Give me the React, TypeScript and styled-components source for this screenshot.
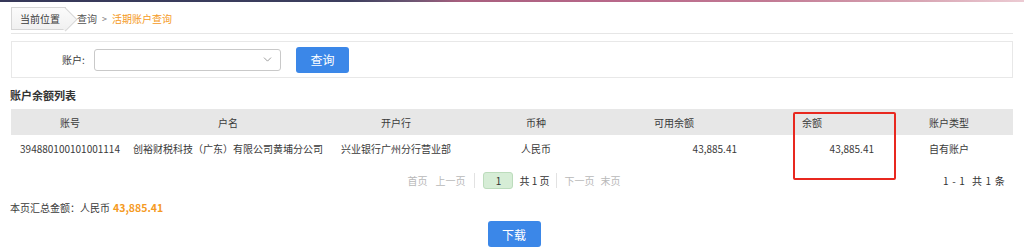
import React from "react";
import styled, { createGlobalStyle } from "styled-components";
import { ChevronDown } from "lucide-react";

const Global = createGlobalStyle`
  html, body { margin: 0; padding: 0; background: #fff; }
  body {
    font-family: "Noto Sans CJK SC", "Noto Sans", sans-serif;
    font-size: 10px;
    color: #3a3a3a;
  }
  * { box-sizing: border-box; }
`;

const TopBar = styled.div`
  height: 2px;
  background: linear-gradient(
    to right,
    #363859 0%,
    #3c3e5e 34%,
    #6a5572 40%,
    #a85f7e 45%,
    #b8688a 60%,
    #c27a94 75%,
    #d8a6b4 90%,
    #eccbd3 100%
  );
`;

const Page = styled.div`
  padding: 0 11px;
  width: 1024px;
`;

const Crumbs = styled.div`
  margin-top: 5px;
  padding-bottom: 3px;
  border-bottom: 1px solid #e6e6e6;
  display: flex;
  align-items: center;
  gap: 3px;
  box-sizing: content-box;
  height: 23px;
`;

const CrumbTab = styled.div`
  position: relative;
  height: 23px;
  width: 55px;
  padding-left: 8px;
  display: flex;
  align-items: center;
  background: linear-gradient(#fbfbfb, #f0f0f0);
  border: 1px solid #d6d6d6;
  border-right: none;
  color: #3a3a3a;
  margin-right: 8px;
  &::after {
    content: "";
    position: absolute;
    right: -8px;
    top: 2.5px;
    width: 16px;
    height: 16px;
    background: linear-gradient(135deg, #fbfbfb, #f0f0f0);
    border-top: 1px solid #d6d6d6;
    border-right: 1px solid #d6d6d6;
    transform: rotate(45deg);
  }
`;

const TabLabel = styled.span`
  position: relative;
  z-index: 1;
  white-space: nowrap;
`;

const CrumbText = styled.span<{ $active?: boolean }>`
  color: ${(p) => (p.$active ? "#f59a23" : "#555")};
`;

const CrumbSep = styled.span`
  color: #777;
  font-size: 9px;
  margin: 0 2px;
`;

const SearchPanel = styled.div`
  margin-top: 7px;
  height: 37px;
  border: 1px solid #e8e8e8;
  display: flex;
  align-items: center;
  padding-left: 50px;
`;

const Label = styled.span`
  margin-right: 9px;
  width: 23px;
`;

const Select = styled.div`
  width: 187px;
  height: 22px;
  border: 1px solid #c9c9c9;
  border-radius: 3px;
  display: flex;
  align-items: center;
  justify-content: flex-end;
  padding-right: 6px;
  color: #888;
`;

const BlueButton = styled.button`
  height: 26px;
  width: 53px;
  border: none;
  border-radius: 3px;
  background: #3b87e8;
  color: #fff;
  font-family: inherit;
  font-size: 12px;
  padding: 0;
  cursor: pointer;
`;

const SearchButton = styled(BlueButton)`
  margin-left: 15px;
`;

const Title = styled.div`
  margin: 9px 0 6px -1px;
  height: 16px;
  line-height: 16px;
  font-size: 11px;
  font-weight: bold;
  color: #333;
`;

const TableWrap = styled.div`
  position: relative;
`;

const Table = styled.table`
  width: 100%;
  border-collapse: collapse;
  table-layout: fixed;
`;

const HeadCell = styled.th<{ $align?: string; $pl?: number; $pr?: number }>`
  height: 26px;
  padding: 0 ${(p) => p.$pr ?? 0}px 0 ${(p) => p.$pl ?? 0}px;
  background: #e7e7e7;
  font-weight: normal;
  color: #3a3a3a;
  text-align: ${(p) => p.$align ?? "center"};
  white-space: nowrap;
`;

const Cell = styled.td<{ $align?: string; $pl?: number; $pr?: number }>`
  height: 27px;
  padding: 0 ${(p) => p.$pr ?? 0}px 0 ${(p) => p.$pl ?? 0}px;
  text-align: ${(p) => p.$align ?? "center"};
  white-space: nowrap;
  color: #3a3a3a;
`;

const RedBox = styled.div`
  position: absolute;
  left: 782px;
  top: 3px;
  width: 103px;
  height: 68px;
  border: 2px solid #e8281f;
  border-radius: 2px;
  pointer-events: none;
`;

const PagerRow = styled.div`
  height: 36px;
  display: grid;
  grid-template-columns: 1fr auto 1fr;
  align-items: center;
`;

const Pager = styled.div`
  grid-column: 2;
  display: flex;
  align-items: center;
  margin-left: 4px;
`;

const PageLink = styled.span<{ $gap?: number }>`
  color: #b8b8b8;
  margin-right: ${(p) => p.$gap ?? 0}px;
`;

const PagerSep = styled.span<{ $l?: number; $r?: number }>`
  width: 1px;
  height: 15px;
  background: #e2e2e2;
  margin: 0 ${(p) => p.$r ?? 8}px 0 ${(p) => p.$l ?? 8}px;
`;

const PageBox = styled.span`
  width: 30px;
  height: 17px;
  border: 1px solid #bcdcbc;
  background: #d6edd6;
  border-radius: 3px;
  display: flex;
  align-items: center;
  justify-content: center;
  color: #333;
  margin-right: 6px;
`;

const PageTotal = styled.span`
  color: #333;
`;

const Count = styled.div`
  grid-column: 3;
  justify-self: end;
  color: #333;
  margin-right: 8px;
  word-spacing: 1px;
  letter-spacing: 0.2px;
`;

const Summary = styled.div`
  margin: 2px 0 0 -1px;
  height: 16px;
  line-height: 16px;
`;

const Amount = styled.span`
  color: #f59a23;
  font-weight: bold;
  font-size: 10.5px;
  margin-left: 3px;
`;

const Footer = styled.div`
  margin-top: 5px;
  display: flex;
  justify-content: center;
  padding-left: 4px;
`;

export default function App() {
  return (
    <>
      <Global />
      <TopBar />
      <Page>
        <Crumbs>
          <CrumbTab>
            <TabLabel>当前位置</TabLabel>
          </CrumbTab>
          <CrumbText>查询</CrumbText>
          <CrumbSep>&gt;</CrumbSep>
          <CrumbText $active>活期账户查询</CrumbText>
        </Crumbs>

        <SearchPanel>
          <Label>账户:</Label>
          <Select>
            <ChevronDown size={13} strokeWidth={1.5} />
          </Select>
          <SearchButton>查询</SearchButton>
        </SearchPanel>

        <Title>账户余额列表</Title>

        <TableWrap>
          <Table>
            <colgroup>
              <col style={{ width: 118 }} />
              <col style={{ width: 198 }} />
              <col style={{ width: 138 }} />
              <col style={{ width: 142 }} />
              <col style={{ width: 186 }} />
              <col style={{ width: 127 }} />
              <col />
            </colgroup>
            <thead>
              <tr>
                <HeadCell>账号</HeadCell>
                <HeadCell>户名</HeadCell>
                <HeadCell>开户行</HeadCell>
                <HeadCell>币种</HeadCell>
                <HeadCell $align="left" $pl={47}>可用余额</HeadCell>
                <HeadCell $align="left" $pl={9}>余额</HeadCell>
                <HeadCell $align="left" $pl={9}>账户类型</HeadCell>
              </tr>
            </thead>
            <tbody>
              <tr>
                <Cell>394880100101001114</Cell>
                <Cell>创裕财税科技（广东）有限公司黄埔分公司</Cell>
                <Cell>兴业银行广州分行营业部</Cell>
                <Cell>人民币</Cell>
                <Cell $align="right" $pr={56}>43,885.41</Cell>
                <Cell $align="right" $pr={46}>43,885.41</Cell>
                <Cell $align="left" $pl={9}>自有账户</Cell>
              </tr>
            </tbody>
          </Table>
          <PagerRow>
            <Pager>
              <PageLink $gap={8}>首页</PageLink>
              <PageLink>上一页</PageLink>
              <PagerSep $l={9} />
              <PageBox>1</PageBox>
              <PageTotal>共 1 页</PageTotal>
              <PagerSep $l={6} />
              <PageLink $gap={6}>下一页</PageLink>
              <PageLink>末页</PageLink>
            </Pager>
            <Count>1 - 1&nbsp;&nbsp;共 1 条</Count>
          </PagerRow>
          <RedBox />
        </TableWrap>

        <Summary>
          本页汇总金额：人民币<Amount>43,885.41</Amount>
        </Summary>

        <Footer>
          <BlueButton>下载</BlueButton>
        </Footer>
      </Page>
    </>
  );
}
